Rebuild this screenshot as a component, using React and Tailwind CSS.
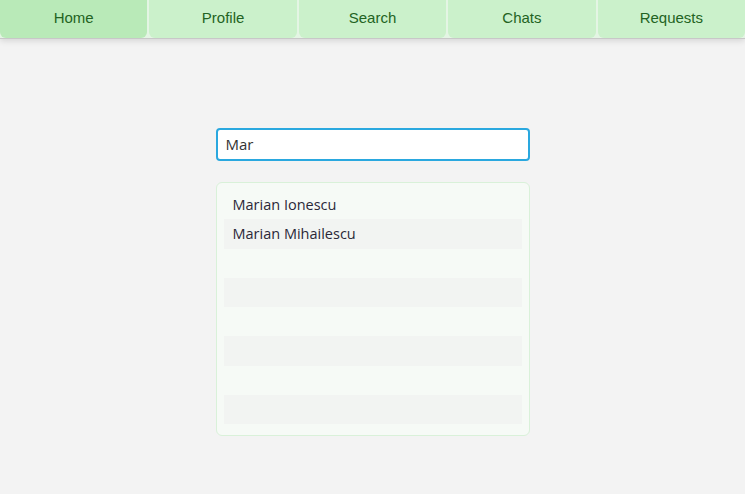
export default function App() {
  const tabs = ["Home", "Profile", "Search", "Chats", "Requests"];
  const rows = ["Marian Ionescu", "Marian Mihailescu", "", "", "", "", "", ""];
  return (
    <div className="min-h-[494px] bg-[#f3f3f3]">
      <div className="flex gap-[2px] h-[39px] bg-[#e4f5e4] border-b border-[#c8c8c8] shadow-[0_2px_6px_rgba(0,0,0,0.12)]">
        {tabs.map((t, i) => (
          <div
            key={t}
            className={`flex-1 flex items-center justify-center pb-[2px] rounded-b-[6px] text-[15px] text-[#236323] ${i === 0 ? "bg-[#b9eab8]" : "bg-[#cbf1cb]"}`}
            style={{ fontFamily: '"Liberation Sans", Arial, sans-serif' }}
          >
            {t}
          </div>
        ))}
      </div>
      <div className="flex flex-col items-center pt-[89px]" style={{ fontFamily: '"Open Sans", "Noto Sans", sans-serif' }}>
        <div className="w-[314px] h-[33px] bg-white border-2 border-[#2aa8df] rounded-[4px] flex items-center px-[8px] text-[15px] text-[#333]">
          Mar
        </div>
        <div className="mt-[21px] w-[314px] bg-[#f6faf6] border border-[#d9f1d9] rounded-[6px] px-[7px] pt-[7px] pb-[11px]">
          {rows.map((r, i) => (
            <div
              key={i}
              className={`h-[29.25px] flex items-center px-[9px] text-[14.5px] text-[#2b2838] ${i % 2 === 1 ? "bg-[#f2f4f2]" : ""}`}
            >
              {r}
            </div>
          ))}
        </div>
      </div>
    </div>
  );
}
